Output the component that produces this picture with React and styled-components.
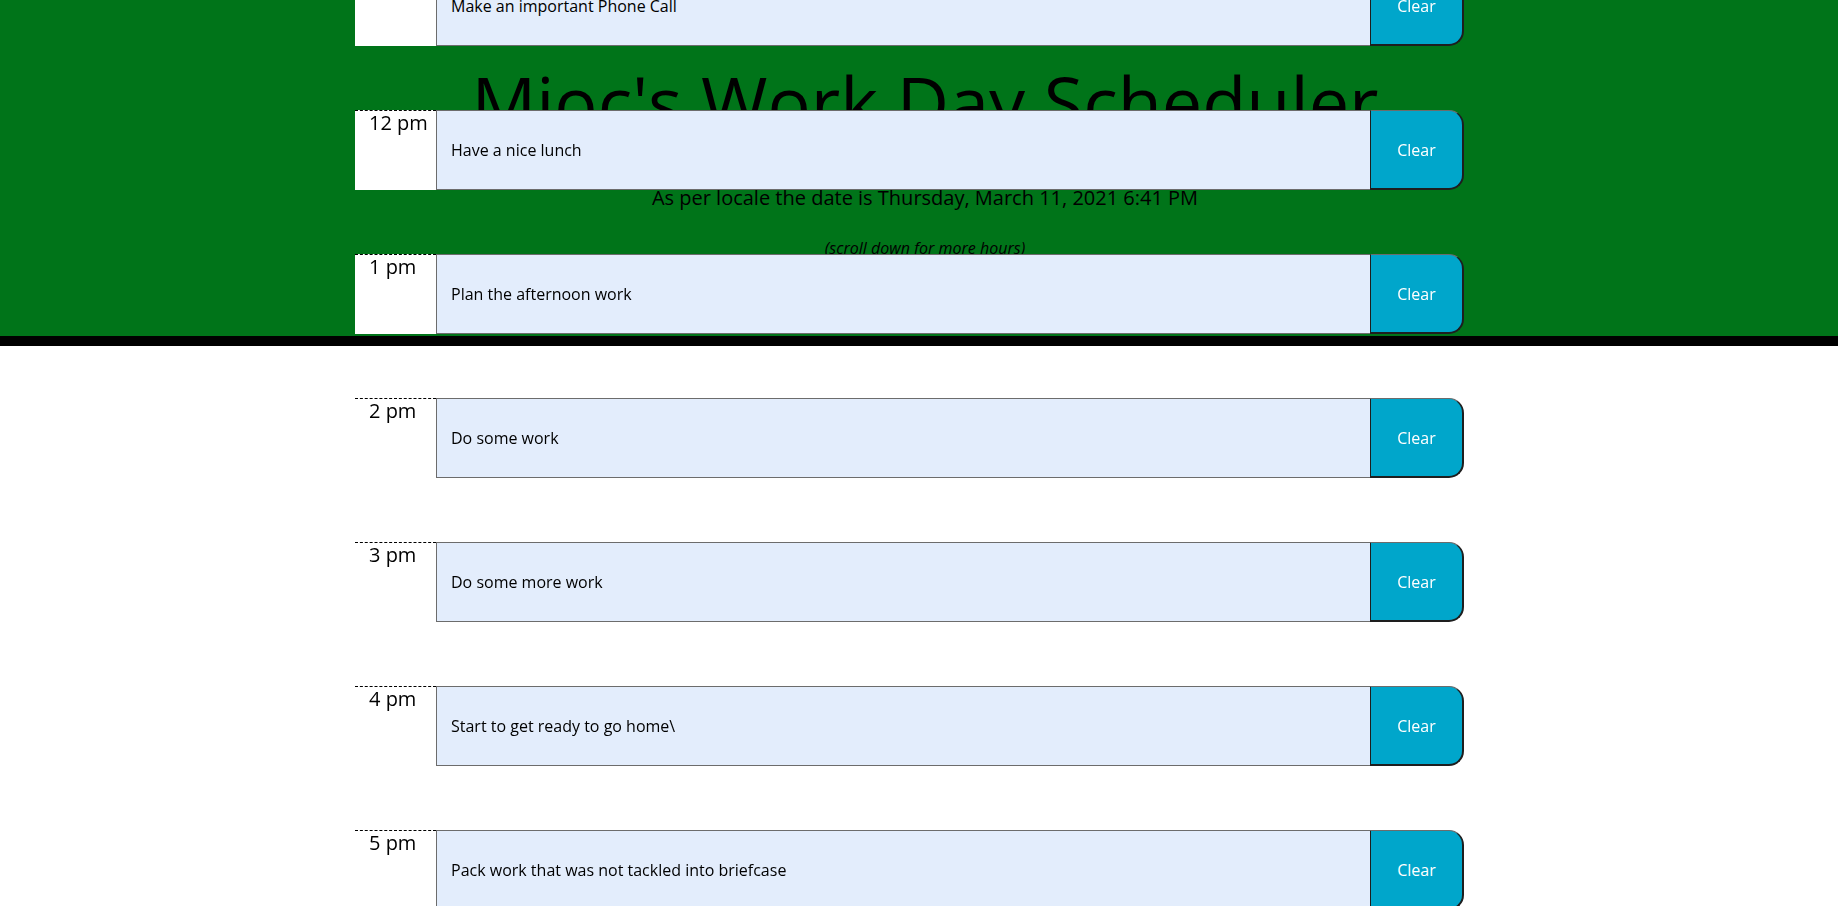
import React from 'react';
import styled, { createGlobalStyle } from 'styled-components';

const GlobalStyle = createGlobalStyle`
  html, body { margin: 0; padding: 0; background: #ffffff; }
  body {
    font-family: "Open Sans", "Liberation Sans", sans-serif;
    color: #000000;
    overflow: hidden;
  }
`;

const Header = styled.header`
  position: fixed;
  top: 0;
  left: 0;
  right: 0;
  box-sizing: border-box;
  height: 346px;
  padding: 58px 0 0 12px;
  background: #007419;
  border-bottom: 10px solid #000000;
  text-align: center;
  z-index: 0;
`;

const Title = styled.h1`
  margin: 0;
  font-size: 72px;
  font-weight: 400;
  line-height: 86px;
`;

const DateLine = styled.p`
  margin: 39px 0 0;
  font-size: 20px;
  font-weight: 400;
  line-height: 30px;
`;

const Hint = styled.p`
  margin: 23px 0 0;
  font-size: 16px;
  font-style: italic;
  line-height: 24px;
`;

const Main = styled.main`
  position: relative;
  z-index: 1;
  padding-right: 19px;
`;

const Container = styled.div`
  width: 1109px;
  margin: -34px auto 0;
`;

const Row = styled.div`
  display: flex;
  height: 80px;
  margin-bottom: 64px;
`;

const Hour = styled.div`
  width: 81px;
  flex: none;
  box-sizing: border-box;
  background: #ffffff;
  border-top: 1px dashed #000000;
  text-align: left;
  padding-left: 14px;
  font-size: 20px;
  line-height: 24px;
  white-space: nowrap;
`;

const Task = styled.textarea`
  flex: 1;
  box-sizing: border-box;
  margin: 0;
  height: 80px;
  border: 1px solid #6c6c6c;
  border-right: none;
  background: #e3edfc;
  color: #000000;
  font-family: "Open Sans", "Liberation Sans", sans-serif;
  font-size: 16px;
  line-height: 24px;
  padding: 27px 14px 0;
  resize: none;
  outline: none;
  overflow: hidden;
`;

const ClearButton = styled.button`
  width: 94px;
  flex: none;
  box-sizing: border-box;
  height: 80px;
  margin: 0;
  background: #00a6cb;
  color: #ffffff;
  font-family: "Open Sans", "Liberation Sans", sans-serif;
  font-size: 16px;
  border-top: 1px solid #6c6c6c;
  border-left: 1px solid #1e1e1e;
  border-right: 2px solid #1e1e1e;
  border-bottom: 2px solid #1e1e1e;
  border-radius: 0 15px 15px 0;
  cursor: pointer;
  padding: 0;
`;

const hours = [
  ['11 am', 'Make an important Phone Call'],
  ['12 pm', 'Have a nice lunch'],
  ['1 pm', 'Plan the afternoon work'],
  ['2 pm', 'Do some work'],
  ['3 pm', 'Do some more work'],
  ['4 pm', 'Start to get ready to go home\\'],
  ['5 pm', 'Pack work that was not tackled into briefcase'],
];

export default function App() {
  return (
    <>
      <GlobalStyle />
      <Header>
        <Title>Mioc's Work Day Scheduler</Title>
        <DateLine>As per locale the date is Thursday, March 11, 2021 6:41 PM</DateLine>
        <Hint>(scroll down for more hours)</Hint>
      </Header>
      <Main>
        <Container>
          {hours.map(([h, t]) => (
            <Row key={h}>
              <Hour>{h}</Hour>
              <Task defaultValue={t} />
              <ClearButton>Clear</ClearButton>
            </Row>
          ))}
        </Container>
      </Main>
    </>
  );
}
